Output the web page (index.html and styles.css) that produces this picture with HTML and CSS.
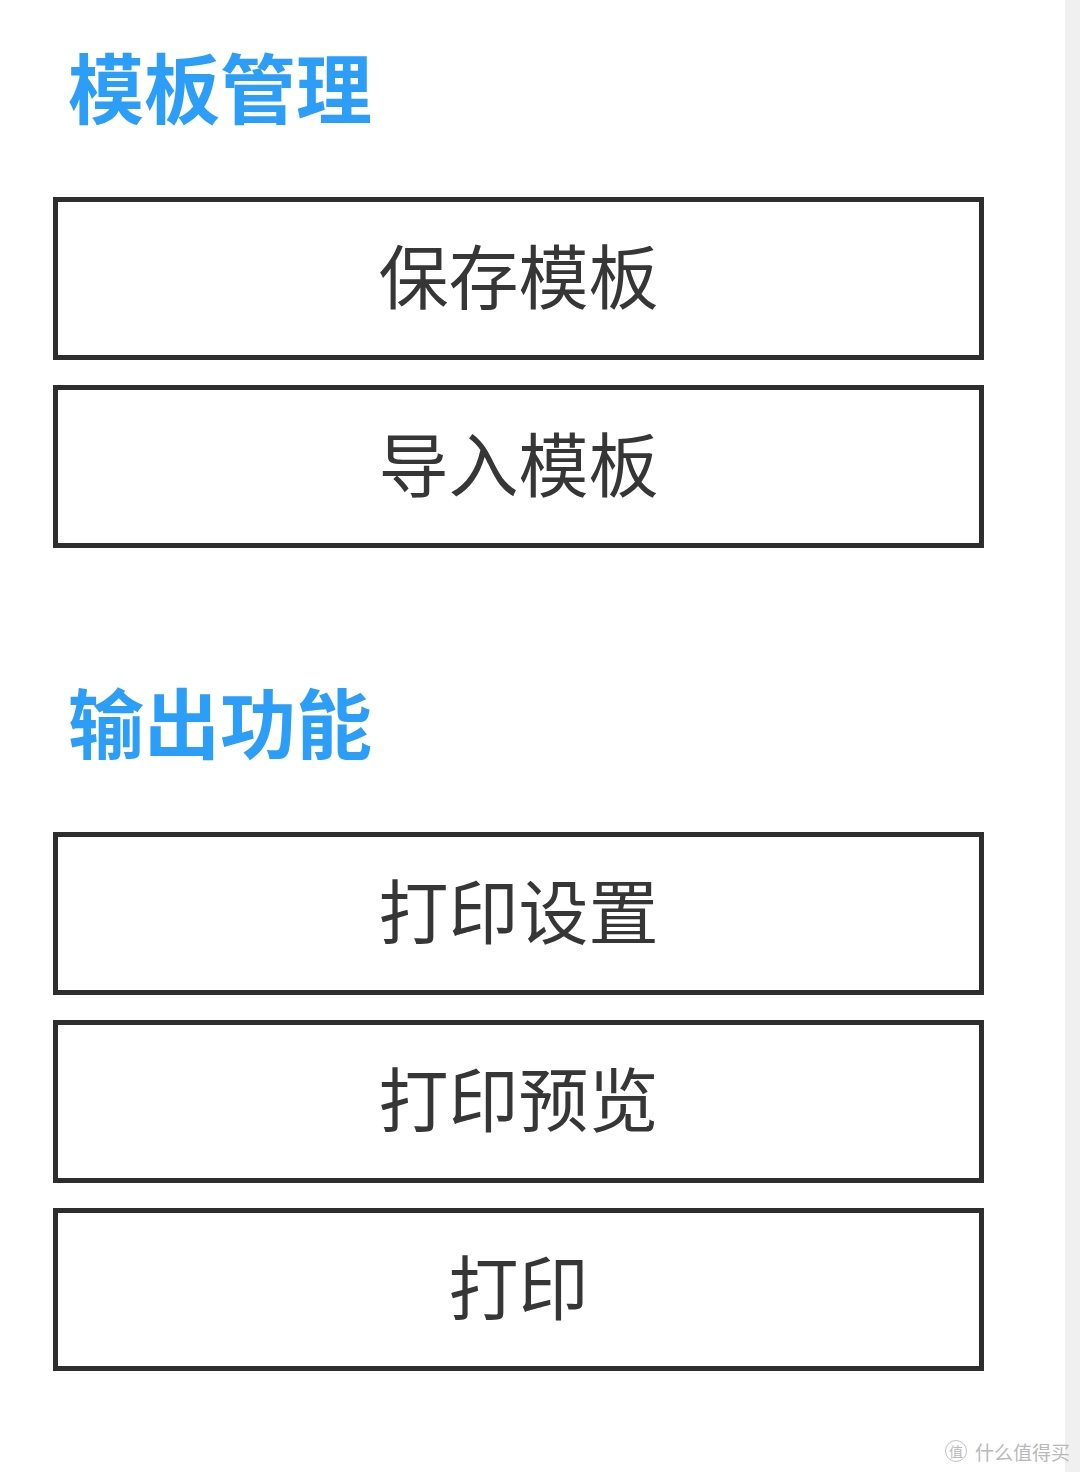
FILE: index.html
```html
<!DOCTYPE html>
<html lang="zh-CN">
<head>
<meta charset="utf-8">
<title>模板管理</title>
<link rel="stylesheet" href="styles.css">
</head>
<body>
<div class="page">
  <main class="panel">
    <section class="group">
      <h2 class="group-title">模板管理</h2>
      <div class="actions">
        <button class="btn" type="button">保存模板</button>
        <button class="btn" type="button">导入模板</button>
      </div>
    </section>
    <section class="group">
      <h2 class="group-title">输出功能</h2>
      <div class="actions">
        <button class="btn" type="button">打印设置</button>
        <button class="btn" type="button">打印预览</button>
        <button class="btn" type="button">打印</button>
      </div>
    </section>
  </main>
  <aside class="edge"></aside>
  <div class="mark"><span class="mark-badge">值</span><span class="mark-text">什么值得买</span></div>
</div>
</body>
</html>
```

FILE: styles.css
```css
html, body {
  margin: 0;
  padding: 0;
  background: #ffffff;
}

body {
  font-family: "Noto Sans CJK SC", "Noto Sans", sans-serif;
}

.page {
  position: relative;
  display: flex;
  width: 1080px;
  height: 1472px;
  overflow: hidden;
}

.panel {
  flex: 1;
  display: flex;
  flex-direction: column;
  gap: 134px;
  padding: 47px 0 0 53px;
  background: #ffffff;
}

.edge {
  width: 15px;
  background: #f0f0f0;
}

.group {
  display: flex;
  flex-direction: column;
}

.group-title {
  margin: 0 0 74px 15px;
  font-size: 76px;
  line-height: 76px;
  font-weight: 700;
  color: #2c9ef8;
  letter-spacing: 0;
}

.actions {
  display: flex;
  flex-direction: column;
  gap: 25px;
}

/* label sits a little above the box's centre */
.btn {
  box-sizing: border-box;
  width: 931px;
  height: 163px;
  margin: 0;
  padding: 0 0 10px;
  border: 5px solid #2e2e2e;
  border-radius: 0;
  background: #ffffff;
  font-family: "Noto Sans CJK SC", "Noto Sans", sans-serif;
  font-size: 70px;
  font-weight: 400;
  line-height: 1;
  color: #363636;
  cursor: pointer;
}

.mark {
  position: absolute;
  right: 10px;
  bottom: 10px;
  display: flex;
  align-items: center;
  gap: 8px;
  color: #b9b9b9;
}

.mark-badge {
  display: flex;
  align-items: center;
  justify-content: center;
  width: 20px;
  height: 20px;
  border: 1.5px solid #c2c2c2;
  border-radius: 50%;
  font-size: 14px;
  line-height: 1;
}

.mark-text {
  font-size: 19px;
  line-height: 1;
}
```
